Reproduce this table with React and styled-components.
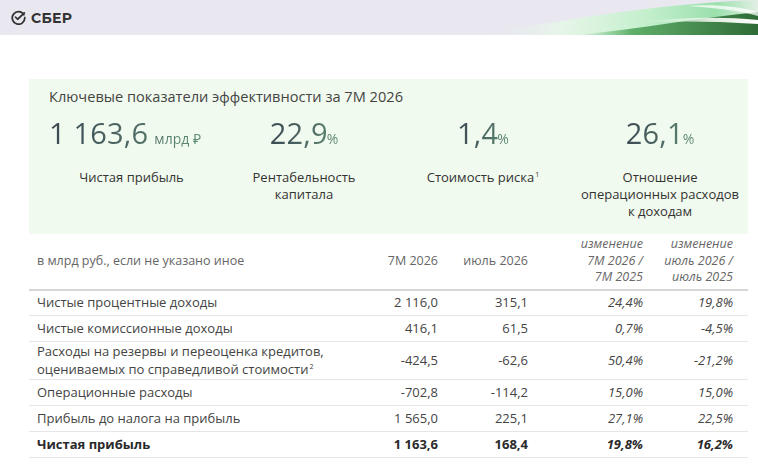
import React from "react";
import styled, { createGlobalStyle } from "styled-components";

const Global = createGlobalStyle`
  html, body { margin: 0; padding: 0; background: #ffffff; }
  body { font-family: "Open Sans", "Noto Sans", sans-serif; color: #444; }
  * { box-sizing: border-box; }
`;

const Page = styled.div`
  width: 758px;
  height: 466px;
  overflow: hidden;
  background: #fff;
`;

const Header = styled.header`
  position: relative;
  height: 35px;
  background: #e9e8f1;
  display: flex;
  align-items: center;
  padding-left: 11px;
  overflow: hidden;
`;

const Logo = styled.div`
  display: flex;
  align-items: center;
  gap: 5px;
  position: relative;
  z-index: 1;
  font-family: "Montserrat", "Open Sans", sans-serif;
  font-weight: 700;
  font-size: 14px;
  letter-spacing: 0.3px;
  color: #333;
`;

const Wave = styled.svg`
  position: absolute;
  right: 0;
  top: 0;
  width: 320px;
  height: 35px;
`;

const Content = styled.main`
  padding: 44px 10px 0 29px;
`;

const Panel = styled.section`
  background: #f1faee;
  padding: 7px 0 14px 20px;
`;

const PanelTitle = styled.h2`
  margin: 0;
  font-weight: 400;
  font-size: 14.6px;
  line-height: 20px;
  color: #444;
`;

const Kpis = styled.div`
  display: grid;
  grid-template-columns: 165px 180px 178px 1fr;
  margin-top: 10px;
`;

const Kpi = styled.div`
  display: flex;
  flex-direction: column;
  align-items: ${(p) => (p.$left ? "flex-start" : "center")};
`;

const KpiValue = styled.div`
  font-size: 29px;
  line-height: 34px;
  font-weight: 400;
  letter-spacing: 0.2px;
  background: linear-gradient(100deg, #3a4652 0%, #4f6b66 55%, #5e8f70 100%);
  -webkit-background-clip: text;
  background-clip: text;
  color: transparent;
  white-space: nowrap;
`;

const KpiUnit = styled.span`
  font-size: 14px;
  margin-left: ${(p) => (p.$gap ? "6px" : "-1px")};
  letter-spacing: 0;
`;

const KpiLabel = styled.div`
  margin-top: 13px;
  font-size: 13px;
  line-height: 17px;
  color: #333;
  text-align: center;
  align-self: center;
  width: 100%;
`;

const Sup = styled.sup`
  font-size: 7px;
  line-height: 0;
  vertical-align: super;
  margin-left: 1px;
`;

const Table = styled.table`
  width: 719px;
  border-collapse: collapse;
  table-layout: fixed;
  font-size: 13px;
  color: #444;
`;

const Th = styled.th`
  font-weight: 400;
  font-size: 12.5px;
  line-height: 16.5px;
  color: #666;
  text-align: ${(p) => (p.$left ? "left" : "right")};
  padding: 2px ${(p) => (p.$last ? "15px" : "8px")} 3px ${(p) => (p.$left ? "8px" : "0")};
  font-style: ${(p) => (p.$italic ? "italic" : "normal")};
  vertical-align: middle;
  border-bottom: 2px solid #d6d6d6;
`;

const Tr = styled.tr`
  border-bottom: 1px solid #e6e6e6;
  font-weight: ${(p) => (p.$bold ? 700 : 400)};
  color: ${(p) => (p.$bold ? "#2a2a2a" : "#444")};
`;

const Td = styled.td`
  height: 26px;
  line-height: 18px;
  padding: 0 ${(p) => (p.$last ? "15px" : "8px")} 1px ${(p) => (p.$left ? "8px" : "0")};
  text-align: ${(p) => (p.$left ? "left" : "right")};
  font-style: ${(p) => (p.$italic ? "italic" : "normal")};
  color: inherit;
  white-space: ${(p) => (p.$left ? "normal" : "nowrap")};
`;

const SberMark = () => (
  <svg width="15" height="15" viewBox="0 0 24 24" fill="none">
    <path
      d="M20.6 7.6A10 10 0 1 0 22 12"
      stroke="#333"
      strokeWidth="2.8"
      strokeLinecap="round"
    />
    <path
      d="M7.2 11.4l3.4 3.4L21.4 4.6"
      stroke="#333"
      strokeWidth="2.8"
      strokeLinecap="round"
      strokeLinejoin="round"
    />
  </svg>
);

const rows = [
  ["Чистые процентные доходы", "2 116,0", "315,1", "24,4%", "19,8%"],
  ["Чистые комиссионные доходы", "416,1", "61,5", "0,7%", "-4,5%"],
  [
    <>
      Расходы на резервы и переоценка кредитов,
      <br />
      оцениваемых по справедливой стоимости<Sup>2</Sup>
    </>,
    "-424,5",
    "-62,6",
    "50,4%",
    "-21,2%",
  ],
  ["Операционные расходы", "-702,8", "-114,2", "15,0%", "15,0%"],
  ["Прибыль до налога на прибыль", "1 565,0", "225,1", "27,1%", "22,5%"],
  ["Чистая прибыль", "1 163,6", "168,4", "19,8%", "16,2%", true],
];

export default function App() {
  return (
    <Page>
      <Global />
      <Header>
        <Logo>
          <SberMark />
          СБЕР
        </Logo>
        <Wave viewBox="0 0 320 35" preserveAspectRatio="none">
          <defs>
            <linearGradient id="mint" x1="0" y1="0" x2="1" y2="0">
              <stop offset="0" stopColor="#e9e8f1" stopOpacity="0" />
              <stop offset="0.3" stopColor="#e6f6e8" />
              <stop offset="0.6" stopColor="#c4efcd" />
              <stop offset="0.85" stopColor="#9be0ad" />
              <stop offset="1" stopColor="#e2efe4" />
            </linearGradient>
            <linearGradient id="deep" x1="0" y1="0" x2="1" y2="0">
              <stop offset="0" stopColor="#7fcf8c" stopOpacity="0" />
              <stop offset="0.3" stopColor="#5fae6a" />
              <stop offset="1" stopColor="#2f6b37" />
            </linearGradient>
            <linearGradient id="shine" x1="0" y1="0" x2="1" y2="0">
              <stop offset="0" stopColor="#ffffff" stopOpacity="0" />
              <stop offset="0.6" stopColor="#f3f7ef" stopOpacity="0.9" />
              <stop offset="1" stopColor="#ffffff" />
            </linearGradient>
          </defs>
          <path d="M40 35 C120 22 210 4 320 0 L320 35 Z" fill="url(#mint)" />
          <path d="M140 35 C200 29 260 18 320 12 L320 35 Z" fill="url(#deep)" />
          <path
            d="M200 22 C240 18 280 16 320 20 L320 24 C280 21 240 21 200 22 Z"
            fill="url(#shine)"
          />
          <path
            d="M250 6 C275 4 300 6 320 12 L320 16 C300 10 275 8 250 6 Z"
            fill="#ffffff"
            opacity="0.75"
          />
        </Wave>
      </Header>

      <Content>
        <Panel>
          <PanelTitle>Ключевые показатели эффективности за 7М 2026</PanelTitle>
          <Kpis>
            <Kpi $left>
              <KpiValue>
                1 163,6<KpiUnit $gap>млрд ₽</KpiUnit>
              </KpiValue>
              <KpiLabel>Чистая прибыль</KpiLabel>
            </Kpi>
            <Kpi>
              <KpiValue>
                22,9<KpiUnit>%</KpiUnit>
              </KpiValue>
              <KpiLabel>
                Рентабельность
                <br />
                капитала
              </KpiLabel>
            </Kpi>
            <Kpi>
              <KpiValue>
                1,4<KpiUnit>%</KpiUnit>
              </KpiValue>
              <KpiLabel>
                Стоимость риска<Sup>1</Sup>
              </KpiLabel>
            </Kpi>
            <Kpi>
              <KpiValue>
                26,1<KpiUnit>%</KpiUnit>
              </KpiValue>
              <KpiLabel>
                Отношение
                <br />
                операционных расходов
                <br />к доходам
              </KpiLabel>
            </Kpi>
          </Kpis>
        </Panel>

        <Table>
          <colgroup>
            <col style={{ width: 309 }} />
            <col style={{ width: 108 }} />
            <col style={{ width: 90 }} />
            <col style={{ width: 115 }} />
            <col style={{ width: 97 }} />
          </colgroup>
          <thead>
            <tr>
              <Th $left>в млрд руб., если не указано иное</Th>
              <Th>7М 2026</Th>
              <Th>июль 2026</Th>
              <Th $italic>
                изменение
                <br />
                7М 2026 /
                <br />
                7М 2025
              </Th>
              <Th $italic $last>
                изменение
                <br />
                июль 2026 /
                <br />
                июль 2025
              </Th>
            </tr>
          </thead>
          <tbody>
            {rows.map((r, i) => (
              <Tr key={i} $bold={r[5]}>
                <Td $left>{r[0]}</Td>
                <Td>{r[1]}</Td>
                <Td>{r[2]}</Td>
                <Td $italic>{r[3]}</Td>
                <Td $italic $last>
                  {r[4]}
                </Td>
              </Tr>
            ))}
          </tbody>
        </Table>
      </Content>
    </Page>
  );
}
